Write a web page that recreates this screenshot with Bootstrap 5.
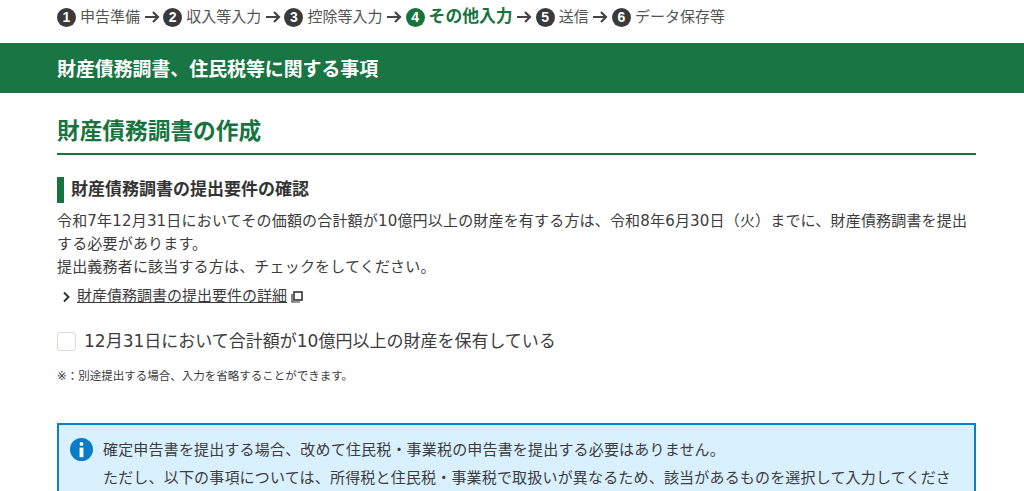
<!DOCTYPE html>
<html lang="ja">
<head>
    <meta charset="UTF-8">
    <meta name="viewport" content="width=device-width, initial-scale=1.0">
    <title>財産債務調書、住民税等に関する事項</title>
    <link href="https://cdn.jsdelivr.net/npm/bootstrap@5.3.0/dist/css/bootstrap.min.css" rel="stylesheet">
    <style>
        body { font-family: "DejaVu Sans", "Noto Sans CJK JP", sans-serif; color: #3c3c3c; font-size: 15px; background: #fff; }
        .page-wrap { padding-left: 57px; padding-right: 48px; }
        .step-bar { height: 43px; padding-bottom: 9px; font-size: 15px; color: #555; }
        .step-num { width: 19px; height: 19px; border-radius: 50%; background: #3a3a3a; color: #fff; font: bold 14px/19px "Liberation Sans", sans-serif; text-align: center; flex: none; margin-right: 4px; }
        .step-on { color: #18733f; font-weight: 700; font-size: 16.8px; }
        .step-on .step-num { background: #18733f; }
        .step-arrow { width: 16px; height: 14px; margin: 0 3.6px; flex: none; }
        .title-band { height: 50px; padding-top: 2px; background: #197543; color: #fff; font-size: 18.9px; font-weight: 700; }
        .sec-title { color: #18733f; font-size: 22.7px; font-weight: 700; line-height: 32px; margin: 22px 0 0; padding-bottom: 6px; border-bottom: 2px solid #18733f; }
        .sub-title { font-size: 17px; font-weight: 700; line-height: 24px; margin: 22px 0 0; padding: 0 0 2px 7px; border-left: 7px solid #18733f; color: #333; }
        .req-text { line-height: 23px; margin: 7px 0 0; letter-spacing: .18px; }
        .detail-link { color: #3c3c3c; font-size: 15px; text-decoration: underline; }
        .detail-row { margin: 5.5px 0 0 5px; height: 24px; }
        .chk-box { width: 19px; height: 19px; border: 1px solid #ddd8d0; border-radius: 3px; background: #fff; flex: none; }
        .chk-row { margin-top: 22px; font-size: 17px; height: 22px; gap: 8px; }
        .note-text { font-size: 11.5px; margin: 15px 0 0; line-height: 16px; }
        .info-box { margin-top: 39px; border: 2px solid #0a80cc; background: #d9f0ff; padding: 11px 13px 12px 11px; }
        .info-icon { width: 23px; height: 23px; flex: none; margin: 2px 10px 0 0; }
        .info-box p { line-height: 28px; margin: 0; letter-spacing: .18px; }
    </style>
</head>
<body>
    <div class="step-bar page-wrap d-flex align-items-center">
        <span class="step-num">1</span><span>申告準備</span>
        <svg class="step-arrow" viewBox="0 0 16 14"><path d="M1 7h13M9 2l5 5-5 5" fill="none" stroke="#444" stroke-width="2.2"/></svg>
        <span class="step-num">2</span><span>収入等入力</span>
        <svg class="step-arrow" viewBox="0 0 16 14"><path d="M1 7h13M9 2l5 5-5 5" fill="none" stroke="#444" stroke-width="2.2"/></svg>
        <span class="step-num">3</span><span>控除等入力</span>
        <svg class="step-arrow" viewBox="0 0 16 14"><path d="M1 7h13M9 2l5 5-5 5" fill="none" stroke="#444" stroke-width="2.2"/></svg>
        <span class="step-on d-flex align-items-center"><span class="step-num">4</span><span>その他入力</span></span>
        <svg class="step-arrow" viewBox="0 0 16 14"><path d="M1 7h13M9 2l5 5-5 5" fill="none" stroke="#444" stroke-width="2.2"/></svg>
        <span class="step-num">5</span><span>送信</span>
        <svg class="step-arrow" viewBox="0 0 16 14"><path d="M1 7h13M9 2l5 5-5 5" fill="none" stroke="#444" stroke-width="2.2"/></svg>
        <span class="step-num">6</span><span>データ保存等</span>
    </div>

    <div class="title-band page-wrap d-flex align-items-center">財産債務調書、住民税等に関する事項</div>

    <div class="page-wrap">
        <h2 class="sec-title">財産債務調書の作成</h2>
        <h3 class="sub-title">財産債務調書の提出要件の確認</h3>
        <p class="req-text">令和7年12月31日においてその価額の合計額が10億円以上の財産を有する方は、令和8年6月30日（火）までに、財産債務調書を提出する必要があります。<br>提出義務者に該当する方は、チェックをしてください。</p>

        <div class="detail-row d-flex align-items-center">
            <svg width="11" height="12" viewBox="0 0 11 12" class="me-1"><path d="M2 1.5 6.5 6 2 10.5" fill="none" stroke="#333" stroke-width="2"/></svg>
            <a href="#" class="detail-link">財産債務調書の提出要件の詳細</a>
            <svg width="12" height="12" viewBox="0 0 12 12" class="ms-1"><rect x="3" y="1" width="8" height="8" fill="none" stroke="#333" stroke-width="1.6"/><path d="M1 3v8h8" fill="none" stroke="#333" stroke-width="1.2"/></svg>
        </div>

        <div class="chk-row d-flex align-items-center">
            <span class="chk-box"></span>
            <span>12月31日において合計額が10億円以上の財産を保有している</span>
        </div>
        <p class="note-text">※：別途提出する場合、入力を省略することができます。</p>

        <div class="info-box d-flex">
            <svg class="info-icon" viewBox="0 0 24 24"><circle cx="12" cy="12" r="12" fill="#0a7cc8"/><circle cx="12" cy="6.2" r="2" fill="#fff"/><rect x="10" y="10" width="4" height="10" fill="#fff"/></svg>
            <div>
                <p>確定申告書を提出する場合、改めて住民税・事業税の申告書を提出する必要はありません。</p>
                <p>ただし、以下の事項については、所得税と住民税・事業税で取扱いが異なるため、該当があるものを選択して入力してください。</p>
            </div>
        </div>
    </div>
    <script src="https://cdn.jsdelivr.net/npm/bootstrap@5.3.0/dist/js/bootstrap.bundle.min.js"></script>
</body>
</html>
